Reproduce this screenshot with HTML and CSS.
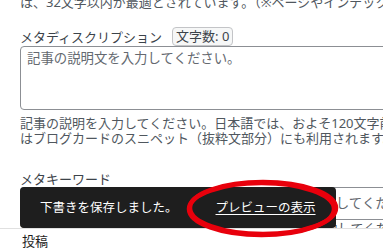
FILE: index.html
```html
<!DOCTYPE html>
<html lang="ja">
<head>
<meta charset="utf-8">
<title>投稿の編集</title>
<link rel="stylesheet" href="styles.css">
</head>
<body>
<div class="editor">
  <main class="content">
    <div class="metabox">
      <p class="desc desc-top">は、32文字以内が最適とされています。（※ページやインデックスページのタイトルには適用されません）</p>
      <div class="field-head">
        <label class="label" for="meta-desc">メタディスクリプション</label>
        <span class="count">文字数: 0</span>
      </div>
      <textarea id="meta-desc" class="textarea" placeholder="記事の説明文を入力してください。"></textarea>
      <p class="desc desc-after">記事の説明を入力してください。日本語では、およそ120文字前後が最適とされています。（※ページやインデックスの<br>はブログカードのスニペット（抜粋文部分）にも利用されます。</p>
      <label class="label label-kw" for="meta-kw">メタキーワード</label>
      <input id="meta-kw" class="input" type="text" placeholder="メタキーワードを、半角カンマ（，）区切りで入力してください。">
      <p class="desc desc-kw">複数のキーワードは、半角カンマ（，）で区切って入力してください。</p>
    </div>
  </main>
  <footer class="footer"><span class="crumb">投稿</span></footer>
  <div class="snackbar">
    <span class="snackbar-text">下書きを保存しました。</span>
    <a class="snackbar-action" href="#">プレビューの表示</a>
  </div>
  <svg class="annotation" width="158" height="66" viewBox="0 0 158 66" aria-hidden="true">
    <ellipse cx="79" cy="32" rx="73" ry="26" fill="none" stroke="#e8000c" stroke-width="4.5"/>
    <ellipse cx="77.5" cy="33" rx="72.5" ry="26" fill="none" stroke="#e8000c" stroke-width="4.5"/>
  </svg>
</div>
</body>
</html>
```

FILE: styles.css
```css
html, body {
  margin: 0;
  padding: 0;
  overflow: hidden;
  background: #ffffff;
}

body {
  font-family: "Noto Sans", "Noto Sans CJK JP", sans-serif;
  font-size: 13px;
  color: #3c434a;
}

.editor {
  position: relative;
  width: 383px;
  height: 249px;
  display: flex;
  flex-direction: column;
}

.content {
  flex: 1;
  min-height: 0;
  overflow: hidden;
}

.metabox {
  width: 680px;
  padding-left: 20px;
}

.desc {
  margin: 0;
  font-size: 13px;
  line-height: 16px;
  color: #50575e;
  white-space: nowrap;
}

.desc-top {
  margin-top: -6px;
}

.field-head {
  margin-top: 17px;
  display: flex;
  align-items: center;
  gap: 10px;
}

.label {
  font-size: 13px;
  line-height: 16px;
  color: #3c434a;
}

.count {
  font-size: 13px;
  line-height: 17px;
  padding: 0 3px;
  border: 1px solid #c3c4c7;
  border-radius: 4px;
  background: #f6f7f7;
  color: #3c434a;
}

.textarea {
  display: block;
  box-sizing: border-box;
  width: 640px;
  height: 64px;
  margin: 0;
  padding: 1px 6px;
  border: 1px solid #8c8f94;
  border-radius: 4px;
  font-family: inherit;
  font-size: 13.4px;
  line-height: 20px;
  color: #2c3338;
  resize: none;
  background: #fff;
}

.textarea::placeholder {
  color: #646970;
  opacity: 1;
}

.desc-after {
  margin-top: 6px;
  line-height: 15px;
}

.label-kw {
  display: block;
  margin-top: 25px;
}

.input {
  display: block;
  box-sizing: border-box;
  width: 640px;
  height: 33px;
  margin: 0;
  padding: 0 8px 2px 11px;
  border: 1px solid #8c8f94;
  border-radius: 4px;
  font-family: inherit;
  font-size: 13.5px;
  background: #fff;
}

.input::placeholder {
  color: #646970;
  opacity: 1;
}

.desc-kw {
  margin-top: 0;
}

.footer {
  box-sizing: border-box;
  height: 21px;
  flex: none;
  border-top: 1px solid #e0e0e0;
  padding: 3px 0 0 22px;
  background: #fff;
}

.crumb {
  font-size: 13px;
  line-height: 16px;
  color: #1e1e1e;
}

.snackbar {
  position: absolute;
  left: 20px;
  top: 187px;
  height: 41px;
  box-sizing: border-box;
  padding: 0 20px;
  display: flex;
  align-items: center;
  background: #1e1e1e;
  border-radius: 4px;
  color: #ffffff;
  font-size: 12.5px;
  line-height: 16px;
}

.snackbar-action {
  margin-left: 38px;
  color: #ffffff;
  text-decoration: underline;
  text-underline-offset: 2px;
}

.annotation {
  position: absolute;
  left: 184px;
  top: 176px;
}
```
